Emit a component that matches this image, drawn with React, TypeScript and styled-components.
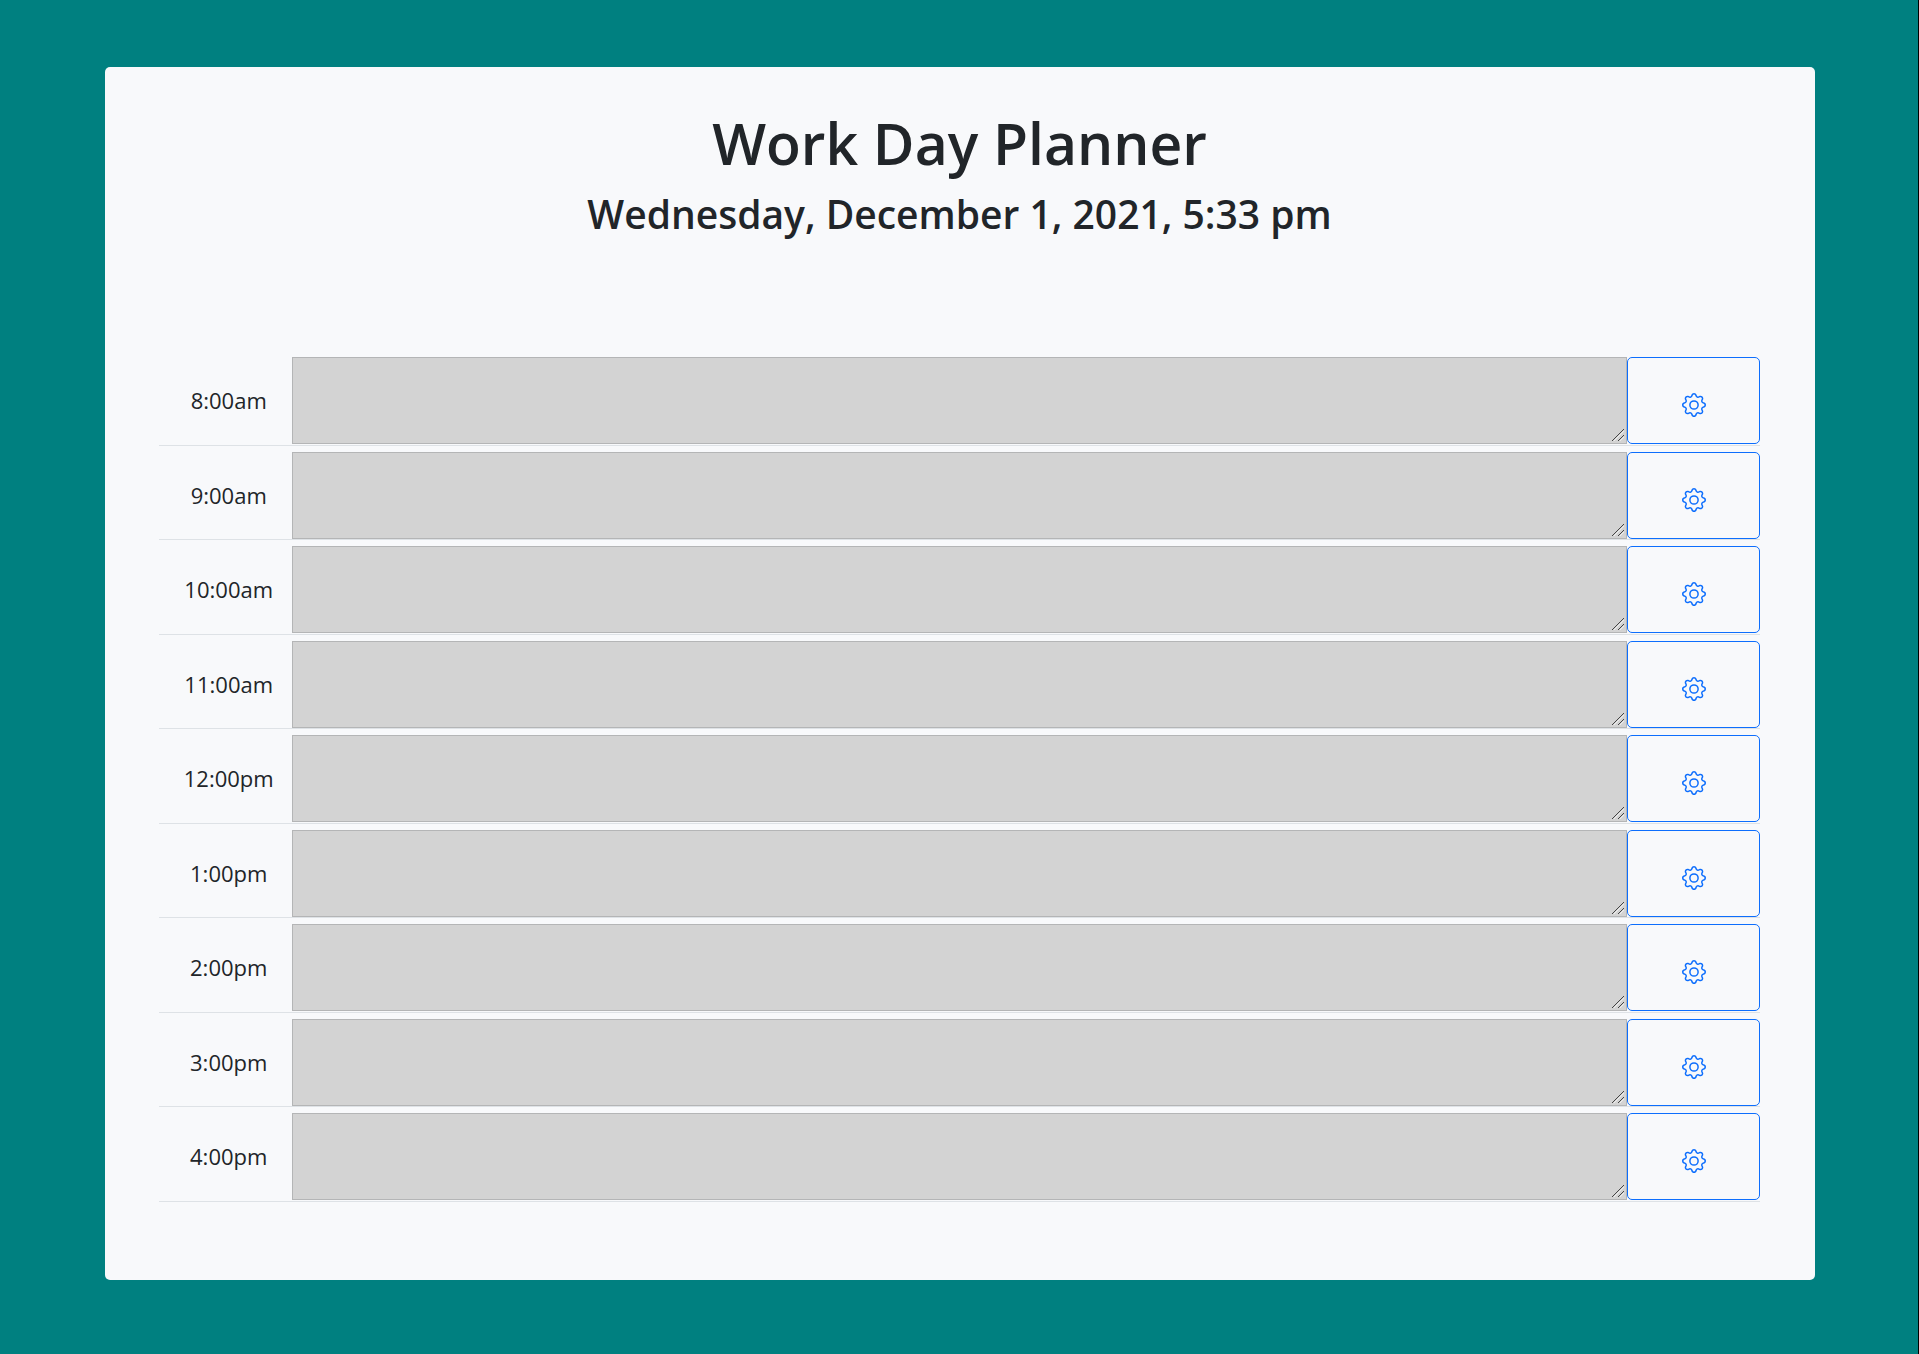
import React from "react";
import styled, { createGlobalStyle } from "styled-components";
import { BsGear } from "react-icons/bs";

const GlobalStyle = createGlobalStyle`
  *, *::before, *::after {
    box-sizing: border-box;
  }

  body {
    margin: 0;
    background: #008080;
    color: #212529;
    font-family: "Segoe UI", "Open Sans", "Noto Sans", sans-serif;
  }
`;

const Page = styled.main`
  min-height: 100vh;
  padding: 67px 103px 74px 105px;
  border-right: 1px solid #000000;
`;

const Card = styled.section`
  padding: 44px 55px 78px 54px;
  border-radius: 5px;
  background: #f8f9fb;
`;

const Header = styled.header`
  height: 240px;
  text-align: center;
`;

const Title = styled.h1`
  margin: 0 0 10px;
  font-size: 57px;
  font-weight: 600;
  line-height: 64px;
`;

const Today = styled.p`
  margin: 0;
  font-size: 39px;
  font-weight: 600;
  line-height: 58px;
`;

const Schedule = styled.div`
  display: grid;
  grid-auto-rows: 1fr;
  min-height: 851px;
`;

const TimeBlock = styled.div`
  display: grid;
  grid-template-columns: 1fr 10fr 1fr;
  align-items: start;
  padding-top: 6px;
  border-bottom: 1px solid #dee2e6;
`;

const Hour = styled.label`
  display: flex;
  align-items: center;
  justify-content: center;
  height: 86px;
  padding-left: 6px;
  font-size: 22px;
  line-height: 32px;
`;

const grip = encodeURIComponent(
  `<svg xmlns="http://www.w3.org/2000/svg" width="12" height="12" fill="none">
    <path d="M1 13 13 1M7 13 13 7" stroke="#eeeeee"/>
    <path d="M0 12 12 0M6 12 12 6" stroke="#444444"/>
  </svg>`
);

const Notes = styled.textarea`
  display: block;
  width: 100%;
  height: 87px;
  padding: 8px;
  border: 1px solid #b4b5b6;
  border-radius: 0;
  background: #d3d3d3 url("data:image/svg+xml,${grip}") no-repeat right 2px bottom 2px;
  color: inherit;
  font: inherit;
  font-size: 22px;
  resize: vertical;

  &::-webkit-resizer {
    background: transparent;
  }
`;

const SaveButton = styled.button`
  display: flex;
  align-items: center;
  justify-content: center;
  height: 87px;
  padding: 9px 0 0 1px;
  border: 1px solid #0d6efd;
  border-radius: 5px;
  background: transparent;
  color: #0d6efd;
  font-size: 24px;
  cursor: pointer;
`;

const hours = [
  "8:00am",
  "9:00am",
  "10:00am",
  "11:00am",
  "12:00pm",
  "1:00pm",
  "2:00pm",
  "3:00pm",
  "4:00pm",
];

export default function App() {
  return (
    <>
      <GlobalStyle />
      <Page>
        <Card>
          <Header>
            <Title>Work Day Planner</Title>
            <Today>Wednesday, December 1, 2021, 5:33 pm</Today>
          </Header>
          <Schedule>
            {hours.map((hour) => (
              <TimeBlock key={hour}>
                <Hour htmlFor={`notes-${hour}`}>{hour}</Hour>
                <Notes id={`notes-${hour}`} rows={2} />
                <SaveButton type="button" aria-label={`Save ${hour}`}>
                  <BsGear />
                </SaveButton>
              </TimeBlock>
            ))}
          </Schedule>
        </Card>
      </Page>
    </>
  );
}
